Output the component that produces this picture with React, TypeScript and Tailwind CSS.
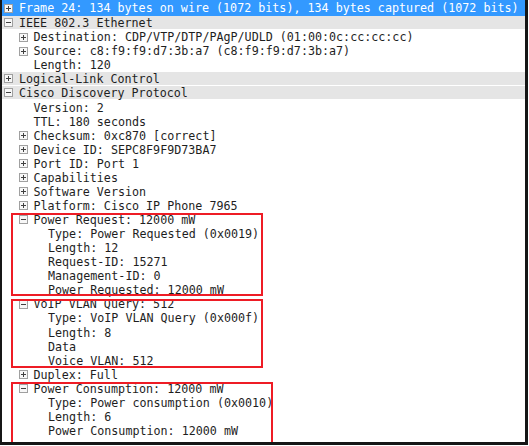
import React from "react";

type Row = { t: string; l: number; e?: "+" | "-"; g?: boolean; sel?: boolean };

const rows: Row[] = [
  { t: "Frame 24: 134 bytes on wire (1072 bits), 134 bytes captured (1072 bits)", l: 0, e: "+", sel: true },
  { t: "IEEE 802.3 Ethernet", l: 0, e: "-", g: true },
  { t: "Destination: CDP/VTP/DTP/PAgP/UDLD (01:00:0c:cc:cc:cc)", l: 1, e: "+" },
  { t: "Source: c8:f9:f9:d7:3b:a7 (c8:f9:f9:d7:3b:a7)", l: 1, e: "+" },
  { t: "Length: 120", l: 1 },
  { t: "Logical-Link Control", l: 0, e: "+", g: true },
  { t: "Cisco Discovery Protocol", l: 0, e: "-", g: true },
  { t: "Version: 2", l: 1 },
  { t: "TTL: 180 seconds", l: 1 },
  { t: "Checksum: 0xc870 [correct]", l: 1, e: "+" },
  { t: "Device ID: SEPC8F9F9D73BA7", l: 1, e: "+" },
  { t: "Port ID: Port 1", l: 1, e: "+" },
  { t: "Capabilities", l: 1, e: "+" },
  { t: "Software Version", l: 1, e: "+" },
  { t: "Platform: Cisco IP Phone 7965", l: 1, e: "+" },
  { t: "Power Request: 12000 mW", l: 1, e: "-" },
  { t: "Type: Power Requested (0x0019)", l: 2 },
  { t: "Length: 12", l: 2 },
  { t: "Request-ID: 15271", l: 2 },
  { t: "Management-ID: 0", l: 2 },
  { t: "Power Requested: 12000 mW", l: 2 },
  { t: "VoIP VLAN Query: 512", l: 1, e: "-" },
  { t: "Type: VoIP VLAN Query (0x000f)", l: 2 },
  { t: "Length: 8", l: 2 },
  { t: "Data", l: 2 },
  { t: "Voice VLAN: 512", l: 2 },
  { t: "Duplex: Full", l: 1, e: "+" },
  { t: "Power Consumption: 12000 mW", l: 1, e: "-" },
  { t: "Type: Power consumption (0x0010)", l: 2 },
  { t: "Length: 6", l: 2 },
  { t: "Power Consumption: 12000 mW", l: 2 },
];

function Exp({ sign }: { sign: "+" | "-" }) {
  return (
    <svg width="9" height="9" viewBox="0 0 9 9" className="shrink-0">
      <rect x="0.5" y="0.5" width="8" height="8" fill="#f7f7f7" stroke="#a0a0a0" />
      <line x1="2" y1="4.5" x2="7" y2="4.5" stroke="#404040" />
      {sign === "+" && <line x1="4.5" y1="2" x2="4.5" y2="7" stroke="#404040" />}
    </svg>
  );
}

const pads = ["pl-[2px]", "pl-[16.5px]", "pl-[31px]"];

export default function App() {
  return (
    <div className="w-[529px] h-[446px] bg-white">
      <div
        className="relative w-[528px] h-[445px] border-l-2 border-r-[3px] border-b-[3px] border-[#161616] bg-white overflow-hidden"
        style={{ fontFamily: '"DejaVu Sans Mono", "Liberation Mono", monospace' }}
      >
        {rows.map((r, i) => (
          <div
            key={i}
            className={`flex items-center ${pads[r.l]} ${i === 0 ? "h-[16px]" : "h-[14.07px]"} ${
              r.sel ? "bg-[#3399ff] text-white" : r.g ? "bg-[#e5e5e5] border-b border-white text-[#1e1e1e]" : "text-[#1e1e1e]"
            } text-[11.7px] leading-none whitespace-nowrap`}
          >
            <div className="w-[15px] shrink-0 flex items-center">
              {r.e && <Exp sign={r.e} />}
            </div>
            <span className="pt-[2px]">{r.t}</span>
          </div>
        ))}
        <div className="absolute left-[9px] top-[213px] w-[252px] h-[83px] border-2 border-[#ee1c25]" />
        <div className="absolute left-[9px] top-[299px] w-[252px] h-[69px] border-2 border-[#ee1c25]" />
        <div className="absolute left-[9px] top-[382px] w-[262px] h-[62px] border-2 border-[#ee1c25]" />
      </div>
    </div>
  );
}
